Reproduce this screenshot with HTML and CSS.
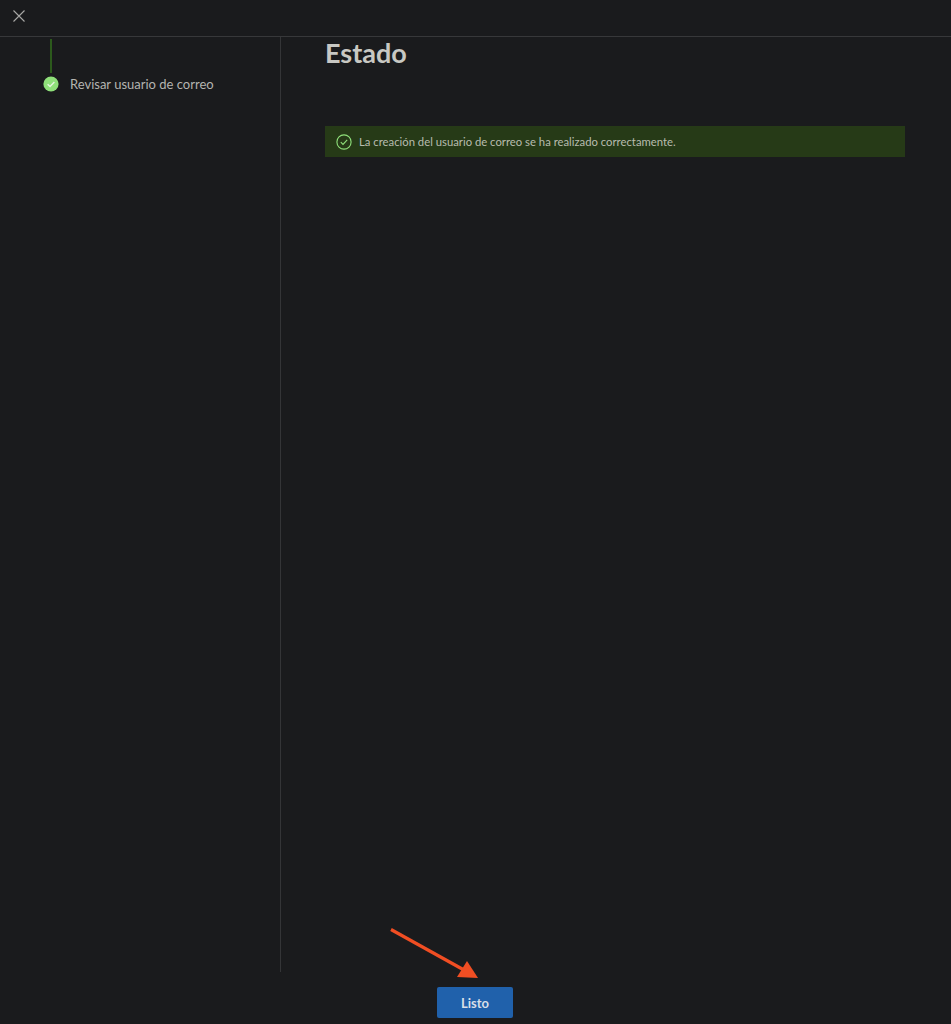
FILE: index.html
```html
<!DOCTYPE html>
<html lang="es">
<head>
    <meta charset="UTF-8">
    <meta name="viewport" content="width=device-width, initial-scale=1.0">
    <title>Estado</title>
    <link rel="stylesheet" href="styles.css">
</head>
<body>
    <div class="page">
        <!-- Barra superior -->
        <header class="top-bar">
            <button class="close-button" aria-label="Cerrar">
                <svg width="12" height="12" viewBox="0 0 12 12">
                    <path d="M0.5 0.5 L11.5 11.5 M11.5 0.5 L0.5 11.5" stroke="#a8a8a6" stroke-width="1.1" fill="none"/>
                </svg>
            </button>
        </header>

        <div class="content">
            <!-- Pasos del asistente -->
            <nav class="steps">
                <div class="step-line"></div>
                <div class="step">
                    <svg class="step-icon" width="16" height="16" viewBox="0 0 16 16">
                        <circle cx="8" cy="8" r="7.6" fill="#8fe07a"/>
                        <path d="M4.6 8.2 L7 10.5 L11.4 5.9" stroke="#e4f5de" stroke-width="1.4" fill="none"/>
                    </svg>
                    <span>Revisar usuario de correo</span>
                </div>
            </nav>

            <main class="status">
                <h1>Estado</h1>
                <div class="message">
                    <svg width="16" height="16" viewBox="0 0 16 16">
                        <circle cx="8" cy="8" r="7.1" stroke="#8fe07a" stroke-width="1.1" fill="none"/>
                        <path d="M4.8 8.2 L7 10.4 L11.2 5.8" stroke="#8fe07a" stroke-width="1.1" fill="none"/>
                    </svg>
                    <span>La creación del usuario de correo se ha realizado correctamente.</span>
                </div>
            </main>
        </div>

        <footer class="bottom-bar">
            <button class="done-button">Listo</button>
        </footer>

        <!-- Flecha de anotación -->
        <svg class="arrow" width="92" height="54" viewBox="0 0 92 54">
            <path d="M1 1.5 L74 42" stroke="#f04e23" stroke-width="3.2" fill="none"/>
            <polygon points="77,33 88,50 67,49" fill="#f04e23"/>
        </svg>
    </div>
</body>
</html>
```

FILE: styles.css
```css
/* Paleta escura */
html, body {
    margin: 0;
    padding: 0;
}

body {
    font-family: "Lato", "Open Sans", sans-serif;
    background-color: #1a1b1d;
    color: #c4c4c0;
}

.page {
    position: relative;
    display: flex;
    flex-direction: column;
    height: 100vh;
    overflow: hidden;
}

.top-bar {
    height: 37px;
    box-sizing: border-box;
    flex-shrink: 0;
    border-bottom: 1px solid #37383a;
    display: flex;
    align-items: center;
    padding-left: 13px;
}

.close-button {
    width: 12px;
    height: 12px;
    padding: 0;
    margin-top: -5px;
    border: none;
    background: none;
    display: flex;
}

.content {
    flex: 1;
    display: flex;
    min-height: 0;
}

.steps {
    width: 281px;
    box-sizing: border-box;
    border-right: 1px solid #343537;
    padding-left: 43px;
}

.step-line {
    width: 2px;
    height: 34px;
    margin: 2px 0 0 7px;
    background-color: #2c5a1c;
}

.step {
    display: flex;
    align-items: center;
    gap: 11px;
    margin-top: 3px;
    font-size: 13px;
    line-height: 16px;
    color: #b4b4b0;
}

.step-icon {
    flex-shrink: 0;
}

.status {
    flex: 1;
    padding: 0 46px 0 44px;
}

h1 {
    margin: 0;
    font-size: 27px;
    line-height: 32px;
    font-weight: 700;
    color: #c8c8c3;
}

.message {
    height: 31px;
    margin-top: 57px;
    padding-left: 11px;
    display: flex;
    align-items: center;
    gap: 7px;
    background-color: #263a17;
    font-size: 11.3px;
    color: #b8bcae;
}

.bottom-bar {
    height: 52px;
    flex-shrink: 0;
    display: flex;
    justify-content: center;
    align-items: flex-start;
    padding: 15px 1px 0 0;
    box-sizing: border-box;
}

.done-button {
    width: 76px;
    height: 31px;
    border: none;
    border-radius: 2px;
    background-color: #2061ab;
    color: #d8dfe8;
    font-family: inherit;
    font-size: 13px;
    font-weight: 700;
}

.arrow {
    position: absolute;
    left: 390px;
    top: 928px;
}
```
